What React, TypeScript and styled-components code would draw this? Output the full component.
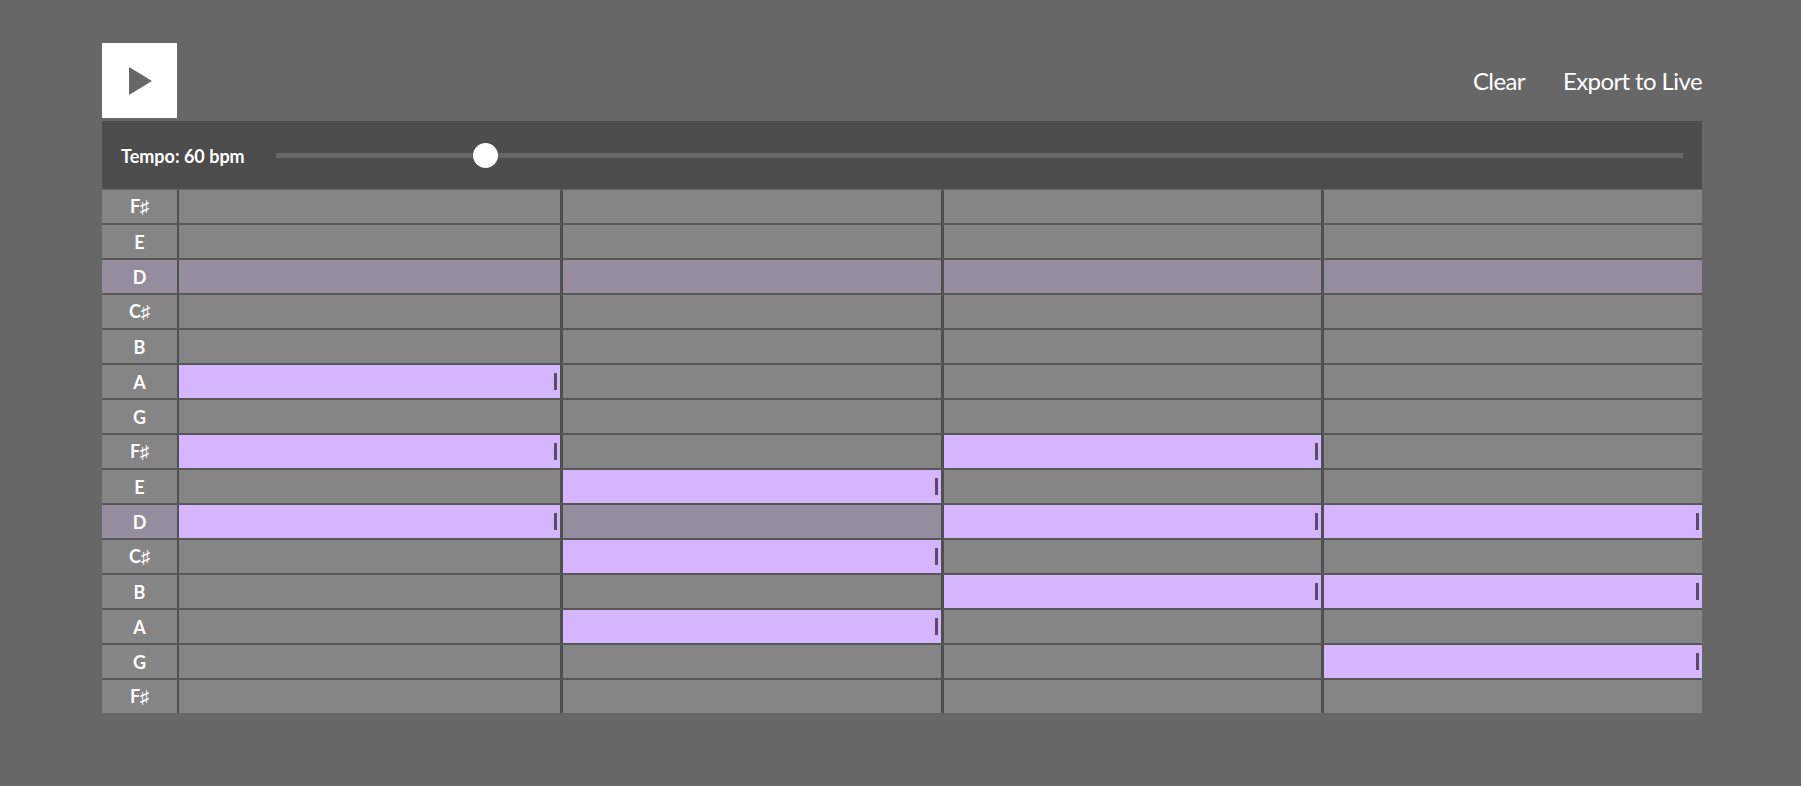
import React, { useState } from 'react';
import styled, { createGlobalStyle } from 'styled-components';

const GlobalStyle = createGlobalStyle`
  html, body {
    margin: 0;
    padding: 0;
    background: #676767;
    font-family: 'Lato', 'Noto Sans', sans-serif;
    color: #ffffff;
  }
`;

const NOTES = ['F♯', 'E', 'D', 'C♯', 'B', 'A', 'G', 'F♯', 'E', 'D', 'C♯', 'B', 'A', 'G', 'F♯'];
const ROOT_ROWS = [2, 9];

// active cells: bar index -> row indexes
const PATTERN: number[][] = [
  [5, 7, 9],
  [8, 10, 12],
  [7, 9, 11],
  [9, 11, 13],
];

const Page = styled.div`
  width: 1600px;
  margin: 43px 99px 0 102px;
`;

const Header = styled.div`
  display: flex;
  align-items: center;
  justify-content: space-between;
  height: 75px;
  margin-bottom: 3px;
`;

const PlayButton = styled.button`
  width: 75px;
  height: 75px;
  border: none;
  padding: 0;
  background: #ffffff;
  display: flex;
  align-items: center;
  justify-content: center;
  cursor: pointer;
`;

const Actions = styled.div`
  display: flex;
  align-items: center;
  gap: 38px;
`;

const ActionLink = styled.span`
  font-size: 24px;
  color: #ffffff;
  cursor: pointer;
  letter-spacing: -0.6px;
`;

const TempoBar = styled.div`
  display: flex;
  align-items: center;
  height: 68px;
  padding: 0 19px;
  background: #4d4d4d;
  margin-bottom: 1px;
`;

const TempoLabel = styled.span`
  font-size: 18px;
  font-weight: 700;
  white-space: nowrap;
  margin-right: 31px;
  padding-top: 2px;
`;

const Slider = styled.input`
  flex: 1;
  margin: 0;
  height: 25px;
  -webkit-appearance: none;
  appearance: none;
  background: transparent;

  &::-webkit-slider-runnable-track {
    height: 5px;
    background: #676767;
  }

  &::-webkit-slider-thumb {
    -webkit-appearance: none;
    width: 25px;
    height: 25px;
    margin-top: -10px;
    border-radius: 50%;
    background: #ffffff;
    border: none;
  }
`;

const Grid = styled.div`
  display: flex;
  flex-direction: column;
  background: #858585;
`;

const Row = styled.div<{ $last: boolean }>`
  display: grid;
  grid-template-columns: 77px repeat(4, 1fr);
  height: 33px;
  border-bottom: ${p => (p.$last ? 'none' : '2px solid #575757')};
`;

const NoteLabel = styled.div<{ $root: boolean }>`
  display: flex;
  align-items: center;
  justify-content: center;
  font-size: 18px;
  font-weight: 700;
  background: ${p => (p.$root ? '#958d9d' : '#858585')};
  border-right: 2px solid #505050;
`;

const Cell = styled.div<{ $root: boolean; $on: boolean; $first: boolean }>`
  display: flex;
  align-items: center;
  justify-content: flex-end;
  padding-right: 3px;
  background: ${p => (p.$on ? '#d5b5fd' : p.$root ? '#958d9d' : '#858585')};
  border-left: ${p => (p.$first ? 'none' : '3px solid #4f4f4f')};
`;

const Handle = styled.span`
  width: 3px;
  height: 17px;
  background: #5c4a68;
`;

export default function App() {
  const [tempo, setTempo] = useState(60);

  return (
    <>
      <GlobalStyle />
      <Page>
        <Header>
          <PlayButton aria-label="Play">
            <svg width="24" height="28" viewBox="0 0 24 28">
              <polygon points="1,0 24,14 1,28" fill="#676767" />
            </svg>
          </PlayButton>
          <Actions>
            <ActionLink>Clear</ActionLink>
            <ActionLink>Export to Live</ActionLink>
          </Actions>
        </Header>
        <TempoBar>
          <TempoLabel>Tempo: {tempo} bpm</TempoLabel>
          <Slider
            type="range"
            min={40}
            max={180}
            value={tempo}
            onChange={e => setTempo(Number(e.target.value))}
          />
        </TempoBar>
        <Grid>
          {NOTES.map((note, row) => {
            const root = ROOT_ROWS.includes(row);
            return (
              <Row key={row} $last={row === NOTES.length - 1}>
                <NoteLabel $root={root}>{note}</NoteLabel>
                {PATTERN.map((bar, col) => {
                  const on = bar.includes(row);
                  return (
                    <Cell key={col} $root={root} $on={on} $first={col === 0}>
                      {on && <Handle />}
                    </Cell>
                  );
                })}
              </Row>
            );
          })}
        </Grid>
      </Page>
    </>
  );
}
